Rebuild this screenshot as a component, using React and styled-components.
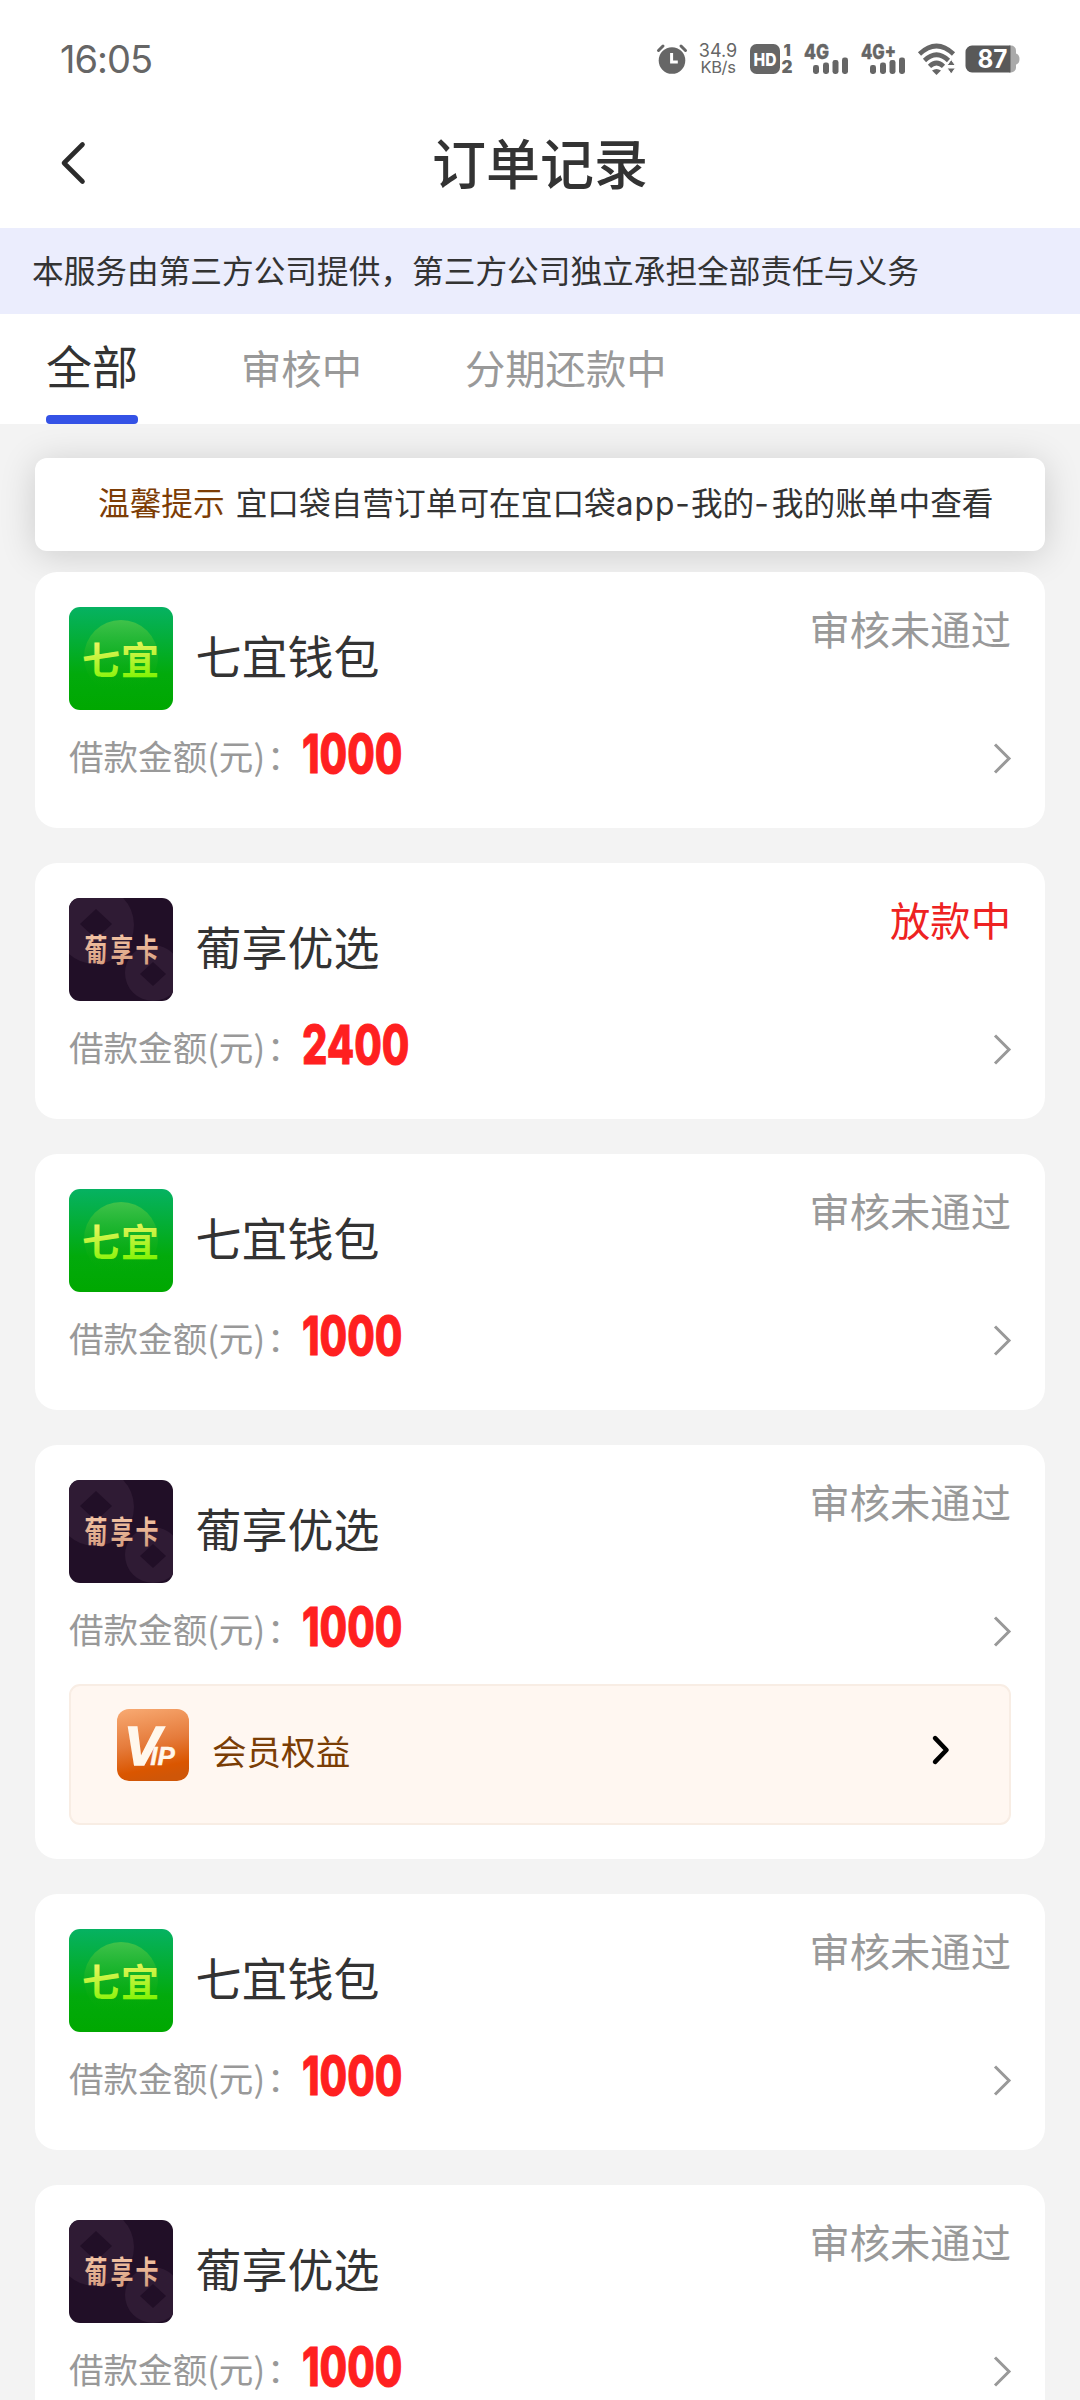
import React from "react";
import styled, { createGlobalStyle } from "styled-components";

const CJK = `"Noto Sans CJK SC", "Noto Sans", sans-serif`;

const GlobalStyle = createGlobalStyle`
  *, *::before, *::after { box-sizing: border-box; }
  html, body { margin: 0; padding: 0; }
  body {
    background: #f3f3f3;
    color: #333333;
    font-family: ${CJK};
    overflow: hidden;
  }
`;

const Page = styled.div`
  display: flex;
  flex-direction: column;
  width: 1080px;
  height: 2400px;
  overflow: hidden;
  background: #f3f3f3;
`;

/* ---------- status bar ---------- */

const StatusBar = styled.header`
  display: flex;
  align-items: center;
  justify-content: space-between;
  height: 117px;
  padding: 0 60px;
  background: #ffffff;
`;

const Clock = styled.time`
  font: 400 38px/46px Inter, sans-serif;
  letter-spacing: -1px;
  color: #666666;
`;

const StatusIcons = styled.div`
  display: flex;
  align-items: center;
`;

const Glyph = styled.svg`
  display: block;
  flex: none;
  width: ${(p) => p.$w}px;
  height: ${(p) => p.$h}px;
  margin-left: ${(p) => p.$gap || 0}px;
  overflow: visible;
`;

const NetSpeed = styled.div`
  display: flex;
  flex-direction: column;
  align-items: center;
  width: 40px;
  margin-left: 11px;
  font: 400 18px/16px Inter, sans-serif;
  color: #666666;
`;

const SpeedUnit = styled.span`
  font-size: 16.5px;
  letter-spacing: -0.4px;
`;

/* ---------- title bar ---------- */

const TitleBar = styled.div`
  display: grid;
  grid-template-columns: 120px 1fr 120px;
  align-items: center;
  height: 111px;
  padding-bottom: 19px;
  background: #ffffff;
`;

const BackButton = styled.button`
  display: flex;
  padding: 0 0 0 59px;
  border: 0;
  background: none;
`;

const Title = styled.h1`
  margin: 0;
  padding-bottom: 3px;
  text-align: center;
  font-size: 54px;
  line-height: 70px;
  font-weight: 500;
  color: #333333;
`;

const Notice = styled.p`
  height: 86px;
  margin: 0;
  padding-left: 32px;
  font-size: 31.68px;
  line-height: 83px;
  white-space: nowrap;
  color: #333333;
  background: #ebedfd;
`;

/* ---------- tabs ---------- */

const Tabs = styled.nav`
  display: flex;
  gap: 103px;
  height: 110px;
  padding-left: 46px;
  background: #ffffff;
`;

const Tab = styled.div`
  display: flex;
  flex-direction: column;
  justify-content: space-between;
  font-size: ${(p) => (p.$active ? 46 : 40.32)}px;
  line-height: ${(p) => (p.$active ? 101 : 106)}px;
  color: ${(p) => (p.$active ? "#333333" : "#999999")};

  &::after {
    content: "";
    height: ${(p) => (p.$active ? 9 : 0)}px;
    border-radius: 4px;
    background: #3452e6;
  }
`;

/* ---------- list ---------- */

const Content = styled.main`
  display: flex;
  flex: 1;
  flex-direction: column;
  min-height: 0;
  padding: 34px 35px 0;
  overflow: hidden;
`;

const Tip = styled.p`
  flex: none;
  height: 93px;
  margin: 0 0 21px;
  padding-left: 63px;
  border-radius: 12px;
  font-size: 31.68px;
  line-height: 87px;
  white-space: nowrap;
  background: #ffffff;
  box-shadow: 0 4px 36px rgba(0, 0, 0, 0.16);
`;

const TipLabel = styled.span`
  margin-right: 11px;
  color: #7d3d05;
`;

const Latin = styled.span`
  font-family: Inter, sans-serif;
  letter-spacing: ${(p) => p.$spacing || 0}px;
`;

const OrderList = styled.div`
  display: flex;
  flex-direction: column;
  flex: none;
  gap: 35px;
`;

const Card = styled.article`
  flex: none;
  padding: 35px 34px ${(p) => (p.$extended ? 34 : 24)}px;
  border-radius: 22px;
  background: #ffffff;
`;

const CardHead = styled.div`
  display: flex;
  height: 103px;
`;

const Name = styled.h2`
  flex: 1;
  margin: 0 0 0 22.5px;
  font-size: 46px;
  font-weight: 400;
  line-height: 94px;
  color: #333333;
`;

const Status = styled.span`
  font-size: 40.32px;
  line-height: 41px;
  color: ${(p) => (p.$paying ? "#ee2222" : "#999999")};
`;

const CardRow = styled.div`
  display: flex;
  align-items: flex-start;
  height: 94px;
`;

const AmountLabel = styled.span`
  width: 232px;
  font-size: 34.56px;
  line-height: 91px;
  white-space: nowrap;
  color: #999999;
`;

const Colon = styled.span`
  margin-left: 2px;
`;

const Amount = styled.strong`
  flex: 1;
  margin-left: 1px;
  font: 800 53.5px/88px Inter, sans-serif;
  color: #ff2020;
  -webkit-text-stroke: 0.9px #ff2020;
  transform: scaleX(0.745);
  transform-origin: left center;
`;

const Benefit = styled.div`
  display: flex;
  align-items: flex-start;
  height: 141px;
  margin-top: 7px;
  padding: 23px 60px 0 46px;
  border: 2px solid #f8ede4;
  border-radius: 11px;
  background: #fff7f1;
`;

const BenefitText = styled.span`
  flex: 1;
  margin-left: 23px;
  font-size: 34.56px;
  line-height: 82px;
  color: #7a3d05;
`;

/* ---------- drawings ---------- */

const AlarmIcon = () => (
  <Glyph $w={30} $h={30} viewBox="0 0 30 30">
    <circle cx="15" cy="16.5" r="13.3" fill="#666" />
    <path d="M1.5 6.5 6 2M28.5 6.5 24 2" stroke="#666" strokeWidth="3" strokeLinecap="round" />
    <path d="M14.6 9v9h6.2" fill="none" stroke="#fff" strokeWidth="3" />
  </Glyph>
);

const HdIcon = () => (
  <Glyph $w={43} $h={32} $gap={12} viewBox="0 0 43 32">
    <rect x="0" y="1" width="30" height="30" rx="6.5" fill="#666" />
    <text x="15" y="22.5" textAnchor="middle" textLength="23" lengthAdjust="spacingAndGlyphs" fontFamily="Inter, sans-serif" fontWeight="800" fontSize="18" fill="#fff">HD</text>
    <text x="33.5" y="12.5" fontFamily="Inter, sans-serif" fontWeight="900" fontSize="16" fill="#666">1</text>
    <text x="31.5" y="30" fontFamily="Inter, sans-serif" fontWeight="900" fontSize="17" fill="#666">2</text>
  </Glyph>
);

const SignalIcon = ({ label, width, gap }) => (
  <Glyph $w={45} $h={32} $gap={gap} viewBox="0 0 45 32">
    <text x="0" y="16" textLength={width} lengthAdjust="spacingAndGlyphs" fontFamily="Inter, sans-serif" fontWeight="800" fontSize="20.5" fill="#666" stroke="#666" strokeWidth="0.4">{label}</text>
    <rect x="9" y="22" width="6" height="9" rx="2.4" fill="#666" />
    <rect x="19" y="19.5" width="6" height="11.5" rx="2.4" fill="#666" />
    <rect x="28.5" y="17" width="6" height="14" rx="2.4" fill="#666" />
    <rect x="38" y="14.5" width="6" height="16.5" rx="2.4" fill="#666" />
  </Glyph>
);

const WifiIcon = () => (
  <Glyph $w={38} $h={32} $gap={12} viewBox="0 0 38 32">
    <path d="M1.5 11Q18.5-5 35.5 11" fill="none" stroke="#666" strokeWidth="4.6" />
    <path d="M6.500 17.500Q18.500 6 30.500 17.500" fill="none" stroke="#666" strokeWidth="4.6" />
    <path d="M11.500 23.400Q18.500 16.600 25.500 23.400" fill="none" stroke="#666" strokeWidth="4.6" />
    <path d="M14 27.500Q18.500 24.500 23 27.500L18.500 32Z" fill="#666" />
    <path d="M33.200 16.500 37.400 22.500H29ZM33.200 31 37.400 25H29Z" fill="#666" stroke="#fff" strokeWidth="1" />
  </Glyph>
);

const BatteryIcon = () => (
  <Glyph $w={55} $h={28} $gap={9} viewBox="0 0 55 28">
    <path d="M44 .5h2a5 5 0 0 1 5 5v17a5 5 0 0 1-5 5h-2Z" fill="#aaa" />
    <path d="M51 8.500q3.500 1 3.500 5.500T51 19.500Z" fill="#aaa" />
    <path d="M7 .5h38.500v27H7a6.500 6.500 0 0 1-6.500-6.500V7A6.500 6.500 0 0 1 7 .5Z" fill="#595959" />
    <text x="27.5" y="23" textAnchor="middle" textLength="30" lengthAdjust="spacingAndGlyphs" fontFamily="Inter, sans-serif" fontWeight="700" fontSize="25" fill="#fff">87</text>
  </Glyph>
);

const BackIcon = () => (
  <Glyph $w={28} $h={46} viewBox="0 0 28 46">
    <path d="M23.500 4.500 5 23 23.500 41.500" fill="none" stroke="#2b2b2b" strokeWidth="4.600" strokeLinecap="round" strokeLinejoin="round" />
  </Glyph>
);

const RowArrow = () => (
  <Glyph $w={18} $h={94} viewBox="0 0 18 94">
    <path d="M2 34.500 16 48.500 2 62.500" fill="none" stroke="#999" strokeWidth="3" />
  </Glyph>
);

const BenefitArrow = () => (
  <Glyph $w={17} $h={76} viewBox="0 0 17 76">
    <path d="M3.100 29.200 14.500 41 3.100 52.800" fill="none" stroke="#000" strokeWidth="4.600" strokeLinecap="round" strokeLinejoin="round" />
  </Glyph>
);

const QiyiLogo = () => (
  <Glyph $w={104} $h={103} viewBox="0 0 104 103">
    <defs>
      <linearGradient id="qyBg" x1="0" y1="0" x2="0" y2="1">
        <stop offset="0" stopColor="#06b262" />
        <stop offset="0.650" stopColor="#02aa0c" />
        <stop offset="1" stopColor="#00a800" />
      </linearGradient>
      <linearGradient id="qyDisc" x1="0" y1="0" x2="0" y2="1">
        <stop offset="0" stopColor="#40c24a" />
        <stop offset="0.600" stopColor="#14b018" stopOpacity="0.500" />
        <stop offset="1" stopColor="#00a800" stopOpacity="0" />
      </linearGradient>
      <linearGradient id="qyText" x1="0" y1="0" x2="0.150" y2="1">
        <stop offset="0.200" stopColor="#f6f468" />
        <stop offset="1" stopColor="#7cf400" />
      </linearGradient>
    </defs>
    <rect width="104" height="103" rx="11" fill="url(#qyBg)" />
    <circle cx="52" cy="50" r="37" fill="url(#qyDisc)" />
    <text x="13 52" y="67" fontFamily={CJK} fontWeight="700" fontSize="38" fill="url(#qyText)">七宜</text>
  </Glyph>
);

const PuxiangLogo = () => (
  <Glyph $w={104} $h={103} viewBox="0 0 104 103">
    <defs>
      <clipPath id="pxClip"><rect width="104" height="103" rx="11" /></clipPath>
      <linearGradient id="pxText" x1="0" y1="0" x2="0" y2="1">
        <stop offset="0.200" stopColor="#f3c4a4" />
        <stop offset="1" stopColor="#d39a7c" />
      </linearGradient>
    </defs>
    <g clipPath="url(#pxClip)">
      <rect width="104" height="103" fill="#210f27" />
      <circle cx="26" cy="27" r="39" fill="#2f1b34" />
      <path d="M27 11 43 26 27 41 11 26Z" fill="#210f27" />
      <circle cx="84" cy="75" r="28" fill="#2f1b34" />
      <path d="M84 64 97 76 84 88 71 76Z" fill="#210f27" />
    </g>
    <g transform="translate(15.500 63) scale(0.740 1)">
      <text x="0 35 69" y="0" fontFamily={CJK} fontWeight="700" fontSize="31" fill="url(#pxText)">葡享卡</text>
    </g>
  </Glyph>
);

const VipLogo = () => (
  <Glyph $w={72} $h={72} viewBox="0 0 72 72">
    <defs>
      <linearGradient id="vipBg" x1="0.200" y1="0" x2="0.400" y2="1">
        <stop offset="0" stopColor="#f7a76f" />
        <stop offset="0.500" stopColor="#e57b3b" />
        <stop offset="0.850" stopColor="#da5600" />
        <stop offset="1" stopColor="#cf5608" />
      </linearGradient>
    </defs>
    <rect width="72" height="72" rx="12" fill="url(#vipBg)" />
    <text x="7" y="55.500" fontFamily="Liberation Sans, sans-serif" fontStyle="italic" fontWeight="700" fontSize="55" fill="#fff7ec" stroke="#fff7ec" strokeWidth="1.500">
      V<tspan dx="-10.500" fontSize="26" strokeWidth="0.400">IP</tspan>
    </text>
  </Glyph>
);

/* ---------- screen ---------- */

const BRANDS = {
  qiyi: { name: "七宜钱包", Logo: QiyiLogo },
  puxiang: { name: "葡享优选", Logo: PuxiangLogo },
};

const ORDERS = [
  { id: 1, brand: "qiyi", amount: 1000, status: "审核未通过" },
  { id: 2, brand: "puxiang", amount: 2400, status: "放款中", paying: true },
  { id: 3, brand: "qiyi", amount: 1000, status: "审核未通过" },
  { id: 4, brand: "puxiang", amount: 1000, status: "审核未通过", benefit: true },
  { id: 5, brand: "qiyi", amount: 1000, status: "审核未通过" },
  { id: 6, brand: "puxiang", amount: 1000, status: "审核未通过" },
];

function OrderCard({ order }) {
  const { name, Logo } = BRANDS[order.brand];
  return (
    <Card $extended={order.benefit}>
      <CardHead>
        <Logo />
        <Name>{name}</Name>
        <Status $paying={order.paying}>{order.status}</Status>
      </CardHead>
      <CardRow>
        <AmountLabel>借款金额(元)<Colon>：</Colon></AmountLabel>
        <Amount>{order.amount}</Amount>
        <RowArrow />
      </CardRow>
      {order.benefit && (
        <Benefit>
          <VipLogo />
          <BenefitText>会员权益</BenefitText>
          <BenefitArrow />
        </Benefit>
      )}
    </Card>
  );
}

export default function App() {
  return (
    <>
      <GlobalStyle />
      <Page>
        <StatusBar>
          <Clock>16:05</Clock>
          <StatusIcons>
            <AlarmIcon />
            <NetSpeed>
              <span>34.9</span>
              <SpeedUnit>KB/s</SpeedUnit>
            </NetSpeed>
            <HdIcon />
            <SignalIcon label="4G" width={25} gap={11} />
            <SignalIcon label="4G+" width={35} gap={12} />
            <WifiIcon />
            <BatteryIcon />
          </StatusIcons>
        </StatusBar>
        <TitleBar>
          <BackButton aria-label="返回"><BackIcon /></BackButton>
          <Title>订单记录</Title>
        </TitleBar>
        <Notice>本服务由第三方公司提供，第三方公司独立承担全部责任与义务</Notice>
        <Tabs>
          <Tab $active>全部</Tab>
          <Tab>审核中</Tab>
          <Tab>分期还款中</Tab>
        </Tabs>
        <Content>
          <Tip>
            <TipLabel>温馨提示</TipLabel>
            宜口袋自营订单可在宜口袋<Latin $spacing={1}>app-</Latin>我的<Latin $spacing={3}>-</Latin>我的账单中查看
          </Tip>
          <OrderList>
            {ORDERS.map((order) => (
              <OrderCard key={order.id} order={order} />
            ))}
          </OrderList>
        </Content>
      </Page>
    </>
  );
}
